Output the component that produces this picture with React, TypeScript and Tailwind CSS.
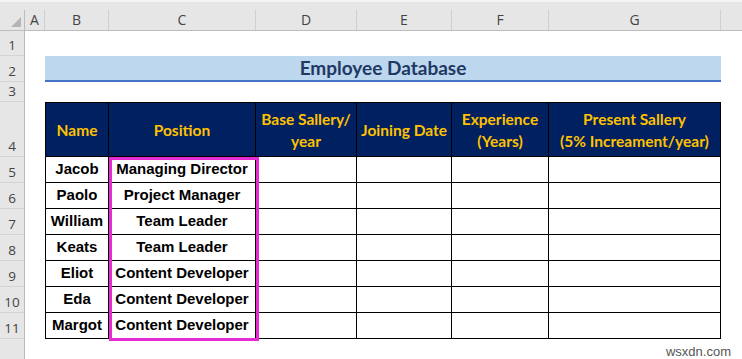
import React from 'react';

type Employee = { name: string; position: string };

const employees: Employee[] = [
  { name: 'Jacob', position: 'Managing Director' },
  { name: 'Paolo', position: 'Project Manager' },
  { name: 'William', position: 'Team Leader' },
  { name: 'Keats', position: 'Team Leader' },
  { name: 'Eliot', position: 'Content Developer' },
  { name: 'Eda', position: 'Content Developer' },
  { name: 'Margot', position: 'Content Developer' },
];

const letters = [
  { label: 'A', w: 'w-[20px]' },
  { label: 'B', w: 'w-[64px]' },
  { label: 'C', w: 'w-[147px]' },
  { label: 'D', w: 'w-[101px]' },
  { label: 'E', w: 'w-[95px]' },
  { label: 'F', w: 'w-[97px]' },
  { label: 'G', w: 'w-[172px]' },
];

const rowHeads = [
  { n: '1', h: 'h-[25px]' },
  { n: '2', h: 'h-[26px]' },
  { n: '3', h: 'h-[20px]' },
  { n: '4', h: 'h-[55px]' },
  { n: '5', h: 'h-[26px]' },
  { n: '6', h: 'h-[26px]' },
  { n: '7', h: 'h-[26px]' },
  { n: '8', h: 'h-[26px]' },
  { n: '9', h: 'h-[26px]' },
  { n: '10', h: 'h-[26px]' },
  { n: '11', h: 'h-[26px]' },
];

const headCell = 'flex items-center justify-center border-r border-b border-black bg-[#002060] text-center text-[15.5px] font-bold leading-[22px] text-[#ffc000]';
const dataCell = 'flex items-center justify-center border-r border-b border-black text-[15px] font-bold text-black';

const App = () => {
  return (
    <div className="relative h-[359px] w-[742px] overflow-hidden bg-white font-['Liberation_Sans',Arial,sans-serif]">
      {/* formula bar edge */}
      <div className="h-[10px] border-t-2 border-[#f4f4f4] bg-[#e6e6e6]" />

      {/* column letters */}
      <div className="flex h-[21px] border-b border-[#bcbcbc] bg-[#e6e6e6] font-['Open_Sans',sans-serif] text-[14px] text-[#444]">
        <div className="relative w-[25px] border-r border-[#bcbcbc]">
          <div className="absolute bottom-[3px] right-[3px] h-0 w-0 border-b-[10px] border-l-[10px] border-b-[#b5b5b5] border-l-transparent" />
        </div>
        {letters.map(l => (
          <div key={l.label} className={`${l.w} flex items-center justify-center border-r border-[#cfcfcf] leading-none`}>
            {l.label}
          </div>
        ))}
        <div className="flex-1" />
      </div>

      <div className="flex">
        {/* row numbers */}
        <div className="w-[25px] h-[328px] border-r border-[#bcbcbc] bg-[#e6e6e6] font-['Open_Sans',sans-serif] text-[13.5px] text-[#444]">
          {rowHeads.map(r => (
            <div key={r.n} className={`${r.h} flex items-end justify-center border-b border-[#d4d4d4] pb-[3px] leading-none`}>
              {r.n}
            </div>
          ))}
        </div>

        {/* sheet body */}
        <div className="relative flex-1">
          <div className="h-[25px]" />

          <div className="flex h-[26px]">
            <div className="w-[20px]" />
            <div className="flex w-[676px] items-center justify-center border-b-2 border-[#4472c4] bg-[#bdd7ee] font-['Lato',sans-serif] text-[19px] font-bold text-[#1f3864]">
              Employee Database
            </div>
          </div>

          <div className="h-[20px]" />

          <div className="flex h-[55px] font-['Lato',sans-serif]">
            <div className="w-[20px]" />
            <div className={`${headCell} w-[64px] border-l border-t`}>Name</div>
            <div className={`${headCell} w-[147px] border-t`}>Position</div>
            <div className={`${headCell} w-[101px] border-t`}>
              <span>Base Sallery/<br />year</span>
            </div>
            <div className={`${headCell} w-[95px] border-t`}>Joining Date</div>
            <div className={`${headCell} w-[97px] border-t`}>
              <span>Experience<br />(Years)</span>
            </div>
            <div className={`${headCell} w-[172px] border-t`}>
              <span>Present Sallery<br />(5% Increament/year)</span>
            </div>
          </div>

          {employees.map(e => (
            <div key={e.name} className="flex h-[26px]">
              <div className="w-[20px]" />
              <div className={`${dataCell} w-[64px] border-l`}>{e.name}</div>
              <div className={`${dataCell} w-[147px]`}>{e.position}</div>
              <div className={`${dataCell} w-[101px]`} />
              <div className={`${dataCell} w-[95px]`} />
              <div className={`${dataCell} w-[97px]`} />
              <div className={`${dataCell} w-[172px]`} />
            </div>
          ))}

          {/* highlight around Position column */}
          <div className="pointer-events-none absolute left-[84px] top-[126px] h-[184px] w-[150px] border-[3px] border-[#e62bd3]" />
        </div>
      </div>

      <div className="absolute bottom-[1px] right-[11px] font-['Liberation_Sans',Arial,sans-serif] text-[13px] leading-none text-[#555]">
        wsxdn.com
      </div>
    </div>
  );
};

export default App;
